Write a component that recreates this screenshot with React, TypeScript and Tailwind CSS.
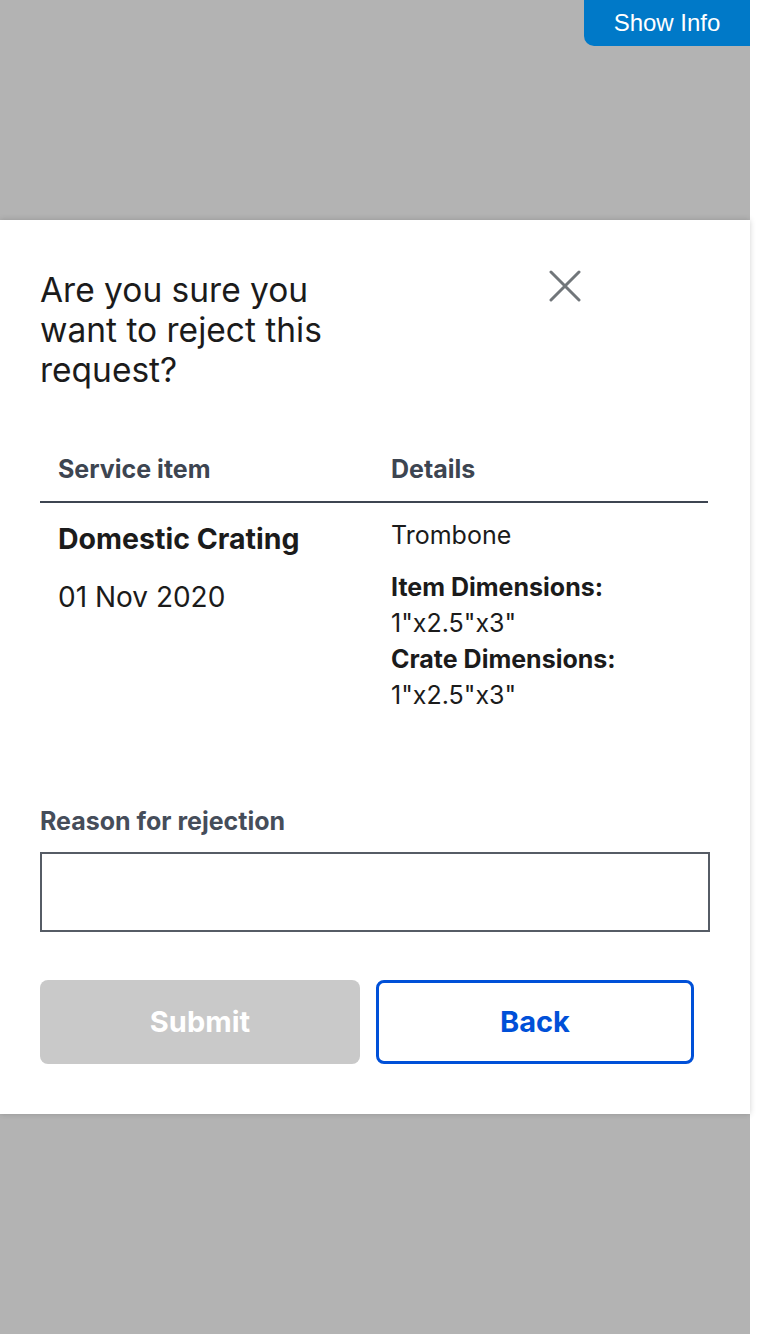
import * as React from "react";

function CloseIcon() {
  return (
    <svg width="32" height="32" viewBox="0 0 32 32" fill="none" aria-hidden="true">
      <path d="M2 2L30 30M30 2L2 30" stroke="#71767a" strokeWidth="3" strokeLinecap="round" />
    </svg>
  );
}

export default function App() {
  return (
    <div className="w-[750px] min-h-[1334px] bg-[#b3b3b3] flex flex-col font-['Inter',sans-serif]">
      <div className="h-[220px] flex justify-end items-start">
        <button
          type="button"
          className="w-[166px] h-[46px] bg-[#0079c8] text-white rounded-bl-[10px] text-[24px] font-['Liberation_Sans',Arial,sans-serif] flex items-center justify-center"
        >
          Show Info
        </button>
      </div>

      <div className="bg-white px-[40px] pt-[41px] pb-[50px] shadow-[0_0_6px_rgba(0,0,0,0.18)]">
        {/* header */}
        <div className="flex items-start w-[550px] justify-between">
          <h2 className="mt-[9px] w-[330px] text-[33.5px] leading-[40px] text-[#1b1b1b] font-normal">
            Are you sure you want to reject this request?
          </h2>
          <button
            type="button"
            aria-label="Close"
            className="w-[50px] h-[50px] flex items-center justify-center"
          >
            <CloseIcon />
          </button>
        </div>

        {/* table */}
        <div className="mt-[50px] w-[668px]">
          <div className="flex border-b-2 border-[#3d4551] pt-[13px] pb-[16px] text-[25px] leading-[32px] font-bold text-[#3d4551]">
            <div className="w-[333px] pl-[18px]">Service item</div>
            <div className="flex-1 pl-[18px]">Details</div>
          </div>
          <div className="flex pt-[14px] text-[#1b1b1b]">
            <div className="w-[333px] pl-[18px]">
              <div className="text-[28.5px] leading-[44px] font-bold">Domestic Crating</div>
              <div className="mt-[18px] text-[28px] leading-[36px]">01 Nov 2020</div>
            </div>
            <div className="flex-1 pl-[18px] text-[25px] leading-[36px]">
              <div>Trombone</div>
              <div className="mt-[16px] font-bold">Item Dimensions:</div>
              <div>1"x2.5"x3"</div>
              <div className="font-bold">Crate Dimensions:</div>
              <div>1"x2.5"x3"</div>
            </div>
          </div>
        </div>

        {/* reason */}
        <label className="block mt-[92px] text-[25px] leading-[32px] font-bold text-[#454d5a]">
          Reason for rejection
        </label>
        <input
          type="text"
          className="mt-[15px] block w-[670px] h-[80px] border-2 border-[#565c65] px-3 outline-none"
        />

        {/* buttons */}
        <div className="mt-[48px] flex gap-[16px]">
          <button
            type="button"
            disabled
            className="w-[320px] h-[84px] rounded-[8px] bg-[#c9c9c9] text-white text-[29px] font-bold"
          >
            Submit
          </button>
          <button
            type="button"
            className="w-[318px] h-[84px] rounded-[8px] border-[3px] border-[#0050d8] bg-white text-[#0050d8] text-[29px] font-bold"
          >
            Back
          </button>
        </div>
      </div>

      <div className="flex-1" />
    </div>
  );
}
